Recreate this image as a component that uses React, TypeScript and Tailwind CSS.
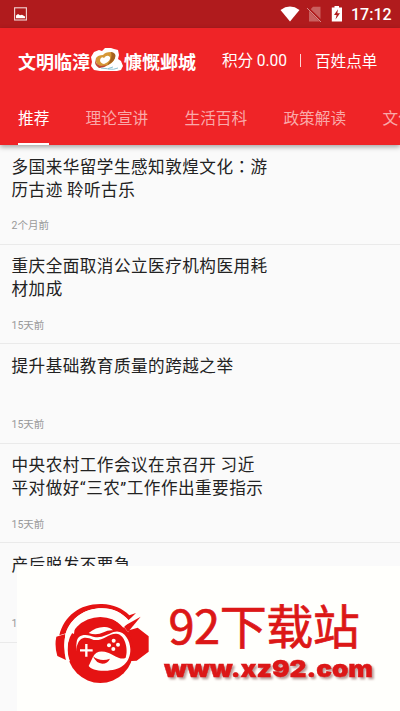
import { Fragment } from 'react';

const tabs = ['推荐', '理论宣讲', '生活百科', '政策解读', '文化生活'];

const articles = [
  { title: ['多国来华留学生感知敦煌文化：游', '历古迹 聆听古乐'], date: '2个月前' },
  { title: ['重庆全面取消公立医疗机构医用耗', '材加成'], date: '15天前' },
  { title: ['提升基础教育质量的跨越之举'], date: '15天前' },
  { title: ['中央农村工作会议在京召开 习近', '平对做好“三农”工作作出重要指示'], date: '15天前' },
  { title: ['产后脱发不要急'], date: '15天前' },
];

const StatusBar = () => (
  <div className="flex h-7 items-center bg-[#b01b1d] pr-[9px] pl-[14px] text-white">
    <svg className="h-[14px] w-[13px]" viewBox="0 0 13 14">
      <rect x="0.6" y="0.8" width="11.8" height="12.2" fill="none" stroke="#f3d5d5" strokeWidth="1.1" />
      <path d="M2 11.3V8.5L4 7l2 1.3 2-.6 3 1.8v1.8z" fill="#fff" />
    </svg>
    <div className="ml-auto flex items-center">
      <svg className="h-4 w-5" viewBox="0 0 20 16">
        <path d="M.5 4Q10-2.8 19.5 4L10 15.6z" fill="#fff" />
      </svg>
      <svg className="ml-[7px] h-4 w-[15px]" viewBox="0 0 15 16">
        <path d="M6 .8h7.5v14.7H2V5z" fill="#c9605f" />
        <path d="M.5 1.5 14.5 15.5" stroke="#b01b1d" strokeWidth="2.4" />
        <path d="M0 2 14 16" stroke="#d58a89" strokeWidth="1" />
      </svg>
      <svg className="ml-[9px] h-4 w-3" viewBox="0 0 12 16">
        <path d="M3.5 0h4.5v1.5H11v14H.8v-14h2.7z" fill="#fff" />
        <path d="M7 3.2 3 9h2.6L4.5 13.4 9 7.3H6.3z" fill="#b01b1d" />
      </svg>
      <span className="ml-2 w-10 pt-px font-['Roboto',sans-serif] text-[16px] leading-4 font-medium whitespace-nowrap">17:12</span>
    </div>
  </div>
);

const Emblem = () => (
  <svg className="h-[26px] w-8 shrink-0" viewBox="0 0 32 26">
    <path
      d="M3 4 8 2l3 1 3-3h6l3 1 4 1 1 5-1 4 3 2 2 5-2 4-4 1H14L9 23l-6-1-3-4 1-4-1-5z"
      fill="#fff"
    />
    <path d="M5 10Q7 7 12 7q2-3 8-3 5 1 4 6-2 6-11 9Q6 18 5 14z" fill="#d69837" />
    <path d="M20 4q6 1 4 6-2 5-8 7 6-7 4-13z" fill="#a5621f" />
    <path d="M5 10q-2 6 5 8l6-1q-3 3-8 3Q2 16 5 10z" fill="#bf4535" />
    <path d="M9 12q1-4 4-2 3-4 6-1 1 4-6 7-4-1-4-4z" fill="#fff" />
    <path d="M10 20q7 2 12-1M17 21q6 1 10-1" fill="none" stroke="#8fc3d5" strokeWidth="1" />
  </svg>
);

const Header = () => (
  <header className="h-[117px] bg-[#ef2427] text-white shadow-[0_2px_5px_rgba(0,0,0,0.35)]">
    <div className="flex h-[66px] items-center pl-[18px] whitespace-nowrap">
      <div className="flex w-[178px] items-center text-[18px] leading-6 font-bold">
        <span className="w-[73px]">文明临漳</span>
        <Emblem />
        <span className="pl-px">慷慨邺城</span>
      </div>
      <div className="ml-[26px] flex items-center text-[15.6px]">
        <span className="w-[67px]">
          积分 <span className="font-['Roboto',sans-serif]">0.00</span>
        </span>
        <span className="ml-[11px] h-[13px] w-px bg-[#ffd4d4]" />
        <span className="ml-[14px]">百姓点单</span>
      </div>
    </div>
    <nav className="flex h-[51px] gap-[36.2px] overflow-hidden pl-[18px] text-[15.7px] whitespace-nowrap">
      {tabs.map((tab, i) => (
        <div
          key={tab}
          className={`h-full shrink-0 pt-3 leading-6 ${i === 0 ? 'border-b-2 border-white text-white' : 'text-[#f9a9a9]'}`}
        >
          {tab}
        </div>
      ))}
    </nav>
  </header>
);

// Curly quotes are set in the narrow latin face, the full-width colon is centred in its cell
const TitleLine = ({ text }: { text: string }) => (
  <span className="block">
    {text.split(/([“”：])/).map((part, i) => {
      if (part === '：') return <span key={i} className="font-['Noto_Sans_CJK_TC',sans-serif]" lang="zh-Hant">{part}</span>;
      if (part === '“' || part === '”') return <span key={i} className="font-['Roboto',sans-serif]">{part}</span>;
      return <Fragment key={i}>{part}</Fragment>;
    })}
  </span>
);

const ArticleRow = ({ title, date }: { title: string[]; date: string }) => (
  <li className="flex h-[99.6px] shrink-0 flex-col border-b border-[#eaeaea] pt-[9.7px] pl-[11.5px]">
    <h2 className="h-[46px] text-[16.6px] leading-[23px] tracking-[0.48px] whitespace-nowrap text-[#222]">
      {title.map((line) => (
        <TitleLine key={line} text={line} />
      ))}
    </h2>
    <p className="mt-[17.3px] font-['Roboto','Noto_Sans_CJK_SC',sans-serif] text-[10.5px] leading-4 text-[#999]">{date}</p>
  </li>
);

const GamepadLogo = () => (
  <svg className="h-[82px] w-[95px]" viewBox="15 25 285 246">
    <g fill="#e51313">
      {/* headband, ear cups and head */}
      <path d="M28 122C42 62 92 26 156 28c34 1 62 13 82 34l20-7-22 22C215 55 190 41 156 41 102 41 62 72 48 116z" />
      <path d="M19 126 46 118 43 150 48 196 22 184Q13 154 19 126z" />
      <path d="m237 107 26-8 33 26v46l-36 27-29 2q15-45 0-80z" />
      <path d="m272 66-38 46-13-17z" />
      <circle cx="151" cy="166" r="99" />
    </g>
    {/* gap between headband and head */}
    <path d="M47 116C62 70 105 41 156 41c33 0 60 13 80 36l22-17-38 39C174 46 101 51 74 102l-2 16-8-4C50 138 50 174 60 200l-12-4c-7-26-7-54-1-80z" fill="#fffffb" />
    <path d="M116 115q22-19 48-18 16 1 25 10-16-1-28 6-22 11-45 2z" fill="#fffffb" />
    {/* gamepad rim running into the face */}
    <path
      d="M80 142c2-18 18-25 41-19 30 12 48-3 70-11 29-9 49 22 50 52 1 38-26 62-68 64-30 2-50-4-57-14l13-28c8-17 26-19 45-12 20 8 38 24 53 15 9-25-2-71-28-72-24-1-38 22-68 19-28-14-42-5-48 12-4 8-4 18-3 28-1-12-2-22 0-34z"
      fill="#fffffb"
    />
    <path d="M129 185q23 18 51 7-7 15-23 15-18 0-28-22z" fill="#e51313" />
    <path d="M109 148v38M90 167h38" stroke="#fffffb" strokeWidth="7" />
    <g fill="#fffffb">
      <circle cx="191" cy="138" r="6" />
      <circle cx="177" cy="152" r="6" />
      <circle cx="204" cy="150" r="6" />
      <circle cx="190" cy="163" r="6" />
    </g>
  </svg>
);

const DownloadBanner = () => (
  <div className="absolute top-[566px] left-[17px] flex h-[145px] w-[383px] bg-[#fffffc]">
    <div className="pt-[37px] pl-[38px]">
      <GamepadLogo />
    </div>
    <div className="pt-[29px] pl-[13px] text-[#dc1717]">
      <div className="pl-[5.5px] text-[47px] leading-[58px] tracking-[-0.5px] whitespace-nowrap [-webkit-text-stroke:0.7px_#dc1717]">92下载站</div>
      <svg className="mt-[3px] h-[34px] w-[218px] overflow-visible drop-shadow-[2px_2px_1px_rgba(80,0,0,0.4)]" viewBox="0 0 218 34">
        <text
          x="1"
          y="20.5"
          textLength="209"
          lengthAdjust="spacingAndGlyphs"
          className="fill-[#dc1717] stroke-[#dc1717] stroke-[0.4px] font-['Inter',sans-serif] text-[23.5px] font-black"
        >
          www.xz92.com
        </text>
      </svg>
    </div>
  </div>
);

function App() {
  return (
    <div className="relative flex h-[711px] w-[400px] flex-col overflow-hidden bg-[#fafafa] font-['Noto_Sans_CJK_SC',sans-serif]">
      <StatusBar />
      <Header />
      <ul className="flex flex-col">
        {articles.map((article) => (
          <ArticleRow key={article.title[0]} {...article} />
        ))}
      </ul>
      <DownloadBanner />
    </div>
  );
}

export default App;
